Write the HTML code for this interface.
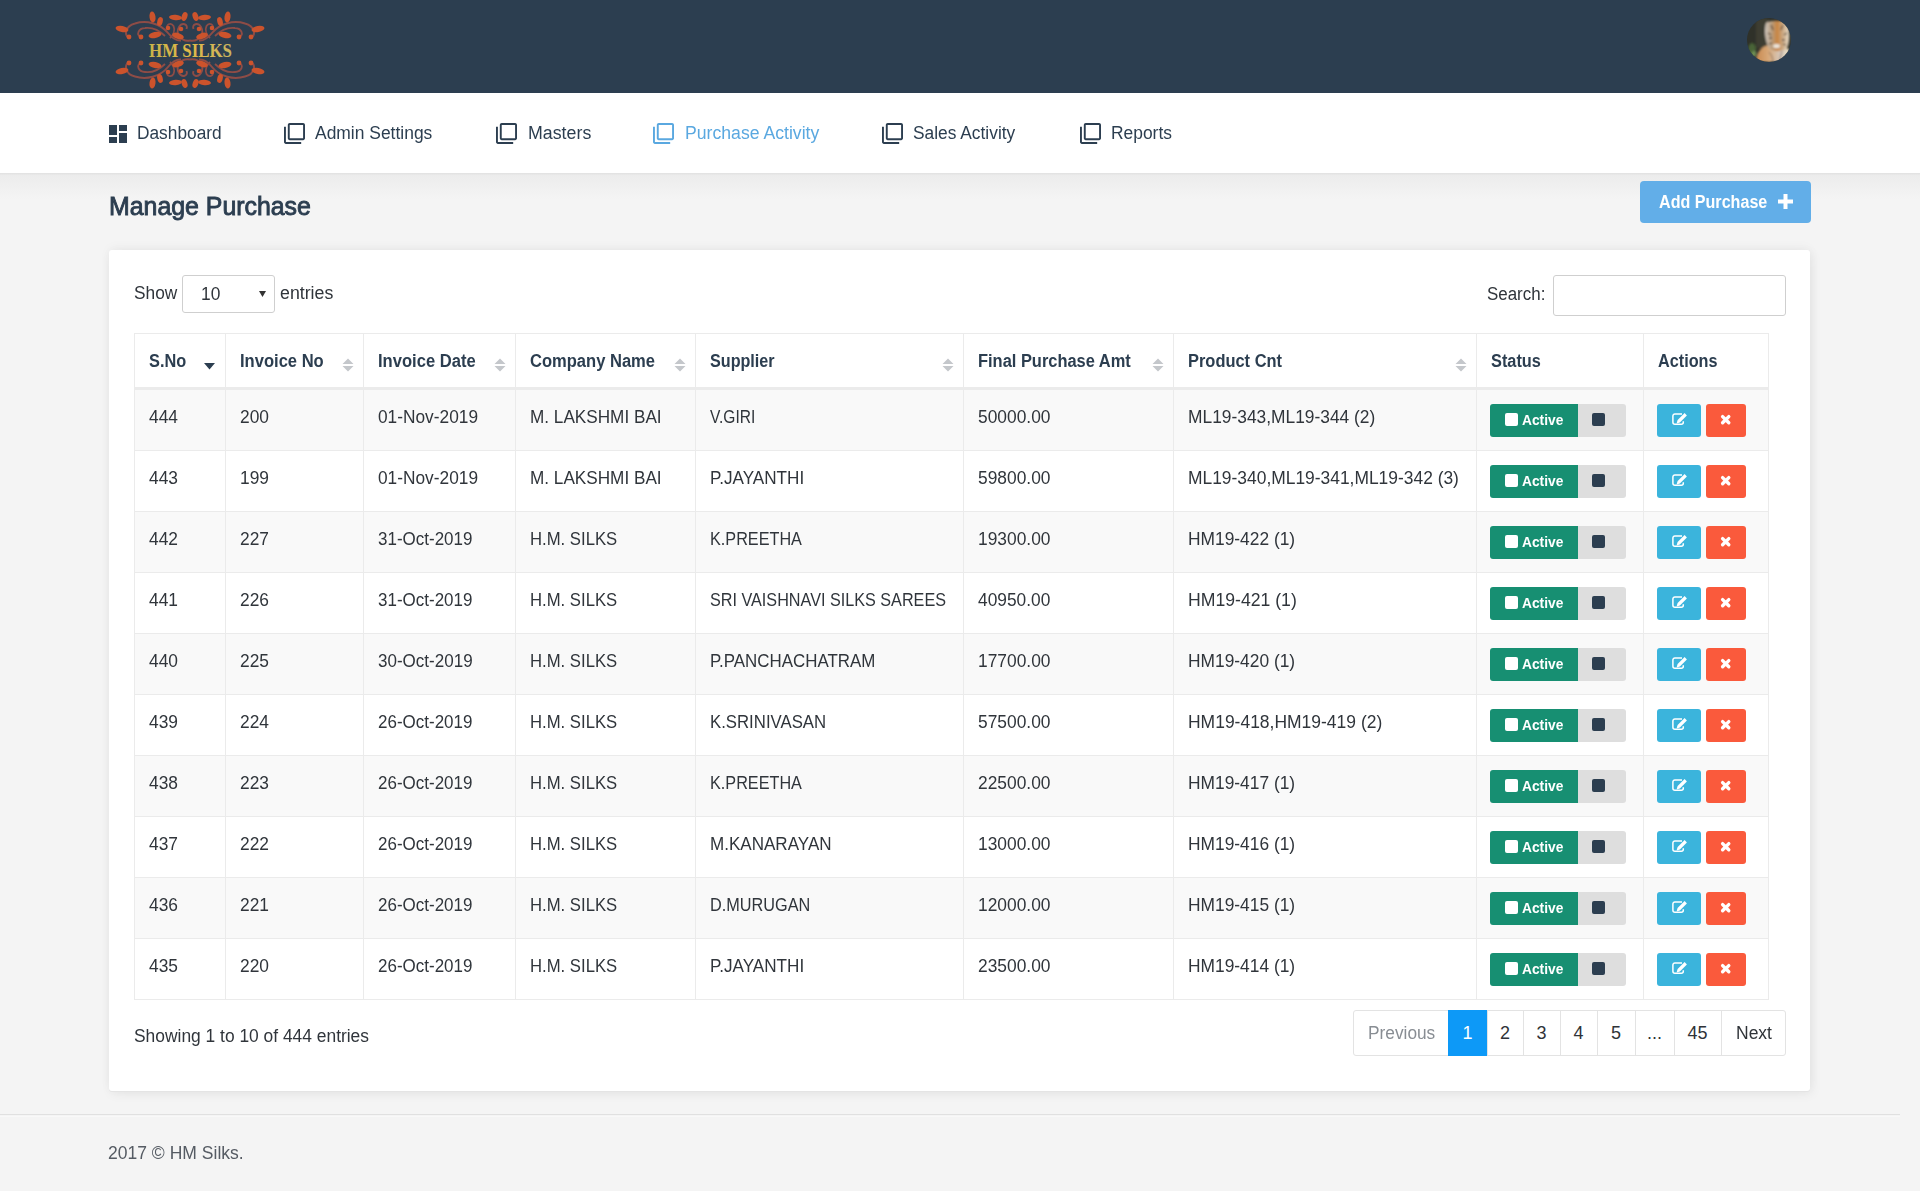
<!DOCTYPE html><html><head><meta charset="utf-8"><title>Manage Purchase</title><style>*{box-sizing:border-box;margin:0;padding:0}
html,body{width:1920px;height:1191px;overflow:hidden}
body{background:#f4f4f4;font-family:"Liberation Sans",sans-serif;color:#30353b;position:relative}
.t{position:absolute;white-space:nowrap;transform-origin:0 50%}
.ic{position:absolute}
.hdr{position:absolute;left:0;top:0;width:1920px;height:93px;background:#2c3e50}
.logo{position:absolute;left:110px;top:5px}
.avatar{position:absolute;left:1747px;top:18px;width:44px;height:44px;border-radius:50%;overflow:hidden;background:#3b3a30}
.av1{position:absolute;left:0;top:0;width:44px;height:44px;background:radial-gradient(circle at 8px 32px,#6d9a4a 0,#3f5a2a 7px,rgba(60,60,45,0) 14px)}
.av2{position:absolute;left:20px;top:2px;width:24px;height:42px;border-radius:40% 40% 30% 30%;background:linear-gradient(90deg,#c9b9a8 0,#c98a4a 40%,#d69a5a 60%,#e4d6c4 100%)}
.av3{position:absolute;left:8px;top:28px;width:30px;height:18px;border-radius:50% 50% 0 0;background:linear-gradient(90deg,#cf9a62,#e8dccd)}
.av4{position:absolute;left:0;top:0;width:44px;height:44px}
.nav{position:absolute;left:0;top:93px;width:1920px;height:80px;background:#fff}
.navshadow{position:absolute;left:0;top:173px;width:1920px;height:26px;background:linear-gradient(#e3e3e3 0,#e3e3e3 1px,#ececec 2px,#f4f4f4 26px)}
.addbtn{position:absolute;left:1640px;top:181px;width:171px;height:42px;background:#62aee8;border-radius:4px}
.card{position:absolute;left:109px;top:250px;width:1701px;height:841px;background:#fff;border-radius:3px;box-shadow:0 1px 0 #e4e4e4,2px 3px 12px rgba(0,0,0,0.06),0 -2px 12px rgba(0,0,0,0.04)}
.sel{position:absolute;left:182px;top:275px;width:93px;height:38px;border:1px solid #cfcfcf;border-radius:3px;background:#fff}
.sinput{position:absolute;left:1553px;top:275px;width:233px;height:41px;border:1px solid #cfcfcf;border-radius:3px;background:#fff}
.tbl{position:absolute;left:134px;top:333px;width:1635px;height:667px;border:1px solid #ebebeb;background:#fff}
.thb{position:absolute;left:135px;top:387px;width:1633px;height:3px;background:#ebebeb}
.tr{position:absolute;left:135px;width:1633px;height:61px;border-bottom:1px solid #ebebeb}
.vl{position:absolute;top:334px;width:1px;height:665px;background:#ebebeb}
.stg{position:absolute;width:88px;height:33px;background:#178f72;border-radius:3px 0 0 3px}
.stx{position:absolute;width:48px;height:33px;background:#dedede;border-radius:0 3px 3px 0}
.sq{position:absolute;width:13px;height:13px;border-radius:2px}
.sq.w{background:#fff}
.sq.d{background:#2c3e50}
.ed{position:absolute;width:44px;height:33px;background:#3bb4dc;border-radius:3px}
.dl{position:absolute;width:40px;height:33px;background:#fa5a3c;border-radius:3px}
.pag{position:absolute;left:1353px;top:1010px;width:433px;height:46px;border:1px solid #e3e3e3;border-radius:3px;background:#fff}
.pl{position:absolute;top:1010px;width:1px;height:46px;background:#e3e3e3}
.pcur{position:absolute;top:1010px;height:46px;background:#0d99f7}
.pt{position:absolute;top:1010px;height:46px;line-height:46px;text-align:center;font-size:18px}
.fline{position:absolute;left:0;top:1114px;width:1900px;height:1px;background:#e0e0e0;box-shadow:0 2px 0 #f8f8f8}
</style></head><body>
<div class="hdr"></div><svg class="logo" width="160" height="90" viewBox="0 0 160 90">
<defs>
<linearGradient id="lg" x1="0" x2="1" y1="0" y2="0"><stop offset="0" stop-color="#c8b44a"/><stop offset="0.5" stop-color="#e0b848"/><stop offset="1" stop-color="#c9b460"/></linearGradient>

</defs>
<g>
<path fill="none" stroke="#8e4c46" stroke-width="2" d="M19 33C14 30 15 21 25 18.5C36 15 50 18 58 28C62 33 66 36 71 35.5"/>
<path fill="none" stroke="#8e4c46" stroke-width="1.8" d="M31 32C26 30 28 23.5 35 23C43 22 50 26 55 31"/>
<path fill="none" stroke="#8e4c46" stroke-width="1.8" d="M58 24C55 19.5 61 17 63.5 21C65.5 25 63 30 60 33"/>
<path fill="none" stroke="#8e4c46" stroke-width="1.9" d="M80 35.5C71 37 65 29 69 22C72 17 78.5 19 76.5 24"/>
<ellipse cx="12" cy="24" rx="6.5" ry="3" fill="#cc532c" transform="rotate(10 12 24)"/>
<ellipse cx="42.5" cy="12" rx="3" ry="5.5" fill="#cc532c" transform="rotate(-8 42.5 12)"/>
<ellipse cx="50" cy="16.5" rx="2.7" ry="4.5" fill="#cc532c" transform="rotate(15 50 16.5)"/>
<ellipse cx="45" cy="30" rx="6.5" ry="3" fill="#cc532c" transform="rotate(-10 45 30)"/>
<ellipse cx="65.5" cy="12.5" rx="6.5" ry="2.7" fill="#cc532c" transform="rotate(5 65.5 12.5)"/>
<ellipse cx="74.5" cy="11.5" rx="2.8" ry="4.5" fill="#cc532c" transform="rotate(20 74.5 11.5)"/>
<ellipse cx="68" cy="31" rx="6" ry="3" fill="#cc532c" transform="rotate(18 68 31)"/>
<circle cx="19" cy="32" r="2.4" fill="#cc532c"/>
<circle cx="31" cy="32" r="2.4" fill="#cc532c"/>
<circle cx="58" cy="23" r="2.3" fill="#cc532c"/>
<circle cx="71" cy="24" r="2.3" fill="#cc532c"/>
</g>
<g transform="translate(160 0) scale(-1 1)">
<path fill="none" stroke="#8e4c46" stroke-width="2" d="M19 33C14 30 15 21 25 18.5C36 15 50 18 58 28C62 33 66 36 71 35.5"/>
<path fill="none" stroke="#8e4c46" stroke-width="1.8" d="M31 32C26 30 28 23.5 35 23C43 22 50 26 55 31"/>
<path fill="none" stroke="#8e4c46" stroke-width="1.8" d="M58 24C55 19.5 61 17 63.5 21C65.5 25 63 30 60 33"/>
<path fill="none" stroke="#8e4c46" stroke-width="1.9" d="M80 35.5C71 37 65 29 69 22C72 17 78.5 19 76.5 24"/>
<ellipse cx="12" cy="24" rx="6.5" ry="3" fill="#cc532c" transform="rotate(10 12 24)"/>
<ellipse cx="42.5" cy="12" rx="3" ry="5.5" fill="#cc532c" transform="rotate(-8 42.5 12)"/>
<ellipse cx="50" cy="16.5" rx="2.7" ry="4.5" fill="#cc532c" transform="rotate(15 50 16.5)"/>
<ellipse cx="45" cy="30" rx="6.5" ry="3" fill="#cc532c" transform="rotate(-10 45 30)"/>
<ellipse cx="65.5" cy="12.5" rx="6.5" ry="2.7" fill="#cc532c" transform="rotate(5 65.5 12.5)"/>
<ellipse cx="74.5" cy="11.5" rx="2.8" ry="4.5" fill="#cc532c" transform="rotate(20 74.5 11.5)"/>
<ellipse cx="68" cy="31" rx="6" ry="3" fill="#cc532c" transform="rotate(18 68 31)"/>
<circle cx="19" cy="32" r="2.4" fill="#cc532c"/>
<circle cx="31" cy="32" r="2.4" fill="#cc532c"/>
<circle cx="58" cy="23" r="2.3" fill="#cc532c"/>
<circle cx="71" cy="24" r="2.3" fill="#cc532c"/>
</g>
<g transform="translate(0 90) scale(1 -1)">
<path fill="none" stroke="#8e4c46" stroke-width="2" d="M19 33C14 30 15 21 25 18.5C36 15 50 18 58 28C62 33 66 36 71 35.5"/>
<path fill="none" stroke="#8e4c46" stroke-width="1.8" d="M31 32C26 30 28 23.5 35 23C43 22 50 26 55 31"/>
<path fill="none" stroke="#8e4c46" stroke-width="1.8" d="M58 24C55 19.5 61 17 63.5 21C65.5 25 63 30 60 33"/>
<path fill="none" stroke="#8e4c46" stroke-width="1.9" d="M80 35.5C71 37 65 29 69 22C72 17 78.5 19 76.5 24"/>
<ellipse cx="12" cy="24" rx="6.5" ry="3" fill="#cc532c" transform="rotate(10 12 24)"/>
<ellipse cx="42.5" cy="12" rx="3" ry="5.5" fill="#cc532c" transform="rotate(-8 42.5 12)"/>
<ellipse cx="50" cy="16.5" rx="2.7" ry="4.5" fill="#cc532c" transform="rotate(15 50 16.5)"/>
<ellipse cx="45" cy="30" rx="6.5" ry="3" fill="#cc532c" transform="rotate(-10 45 30)"/>
<ellipse cx="65.5" cy="12.5" rx="6.5" ry="2.7" fill="#cc532c" transform="rotate(5 65.5 12.5)"/>
<ellipse cx="74.5" cy="11.5" rx="2.8" ry="4.5" fill="#cc532c" transform="rotate(20 74.5 11.5)"/>
<ellipse cx="68" cy="31" rx="6" ry="3" fill="#cc532c" transform="rotate(18 68 31)"/>
<circle cx="19" cy="32" r="2.4" fill="#cc532c"/>
<circle cx="31" cy="32" r="2.4" fill="#cc532c"/>
<circle cx="58" cy="23" r="2.3" fill="#cc532c"/>
<circle cx="71" cy="24" r="2.3" fill="#cc532c"/>
</g>
<g transform="translate(160 90) scale(-1 -1)">
<path fill="none" stroke="#8e4c46" stroke-width="2" d="M19 33C14 30 15 21 25 18.5C36 15 50 18 58 28C62 33 66 36 71 35.5"/>
<path fill="none" stroke="#8e4c46" stroke-width="1.8" d="M31 32C26 30 28 23.5 35 23C43 22 50 26 55 31"/>
<path fill="none" stroke="#8e4c46" stroke-width="1.8" d="M58 24C55 19.5 61 17 63.5 21C65.5 25 63 30 60 33"/>
<path fill="none" stroke="#8e4c46" stroke-width="1.9" d="M80 35.5C71 37 65 29 69 22C72 17 78.5 19 76.5 24"/>
<ellipse cx="12" cy="24" rx="6.5" ry="3" fill="#cc532c" transform="rotate(10 12 24)"/>
<ellipse cx="42.5" cy="12" rx="3" ry="5.5" fill="#cc532c" transform="rotate(-8 42.5 12)"/>
<ellipse cx="50" cy="16.5" rx="2.7" ry="4.5" fill="#cc532c" transform="rotate(15 50 16.5)"/>
<ellipse cx="45" cy="30" rx="6.5" ry="3" fill="#cc532c" transform="rotate(-10 45 30)"/>
<ellipse cx="65.5" cy="12.5" rx="6.5" ry="2.7" fill="#cc532c" transform="rotate(5 65.5 12.5)"/>
<ellipse cx="74.5" cy="11.5" rx="2.8" ry="4.5" fill="#cc532c" transform="rotate(20 74.5 11.5)"/>
<ellipse cx="68" cy="31" rx="6" ry="3" fill="#cc532c" transform="rotate(18 68 31)"/>
<circle cx="19" cy="32" r="2.4" fill="#cc532c"/>
<circle cx="31" cy="32" r="2.4" fill="#cc532c"/>
<circle cx="58" cy="23" r="2.3" fill="#cc532c"/>
<circle cx="71" cy="24" r="2.3" fill="#cc532c"/>
</g>
<text x="80.5" y="51.8" text-anchor="middle" font-family="Liberation Serif" font-weight="bold" font-size="18.5" fill="url(#lg)" textLength="83" lengthAdjust="spacingAndGlyphs">HM SILKS</text>
</svg>
<svg class="ic" style="left:1747px;top:18px" width="44" height="44" viewBox="0 0 44 44">
<defs>
<clipPath id="avc"><circle cx="22" cy="22" r="22"/></clipPath>
<filter id="avf" x="-10%" y="-10%" width="120%" height="120%"><feGaussianBlur stdDeviation="0.8"/></filter>
<linearGradient id="avh" x1="0" x2="1" y1="0" y2="0"><stop offset="0" stop-color="#cfc6bd"/><stop offset="0.3" stop-color="#b89a78"/><stop offset="0.5" stop-color="#c98440"/><stop offset="0.7" stop-color="#c9a47c"/><stop offset="1" stop-color="#e8dcc8"/></linearGradient>
<linearGradient id="avb" x1="0" x2="1" y1="0" y2="0"><stop offset="0" stop-color="#c88a50"/><stop offset="0.35" stop-color="#d8a878"/><stop offset="0.7" stop-color="#d6c8bc"/><stop offset="1" stop-color="#efe2c0"/></linearGradient>
</defs>
<g clip-path="url(#avc)">
<rect width="44" height="44" fill="#2f3129"/>
<g filter="url(#avf)">
<rect x="9" y="0" width="12" height="30" fill="#3d3e33"/>
<ellipse cx="5" cy="32" rx="4" ry="7" fill="#5a8540" opacity="0.6"/>
<ellipse cx="7" cy="36" rx="2.5" ry="3" fill="#8fb870" opacity="0.55"/>
<path d="M9 44C9 35 14 28 22 27C32 26 41 29 44 34V44z" fill="url(#avb)"/>
<path d="M19 5C22 2 37 2 40 5C43 11 43 24 40 30C36 34 25 34 22 30C18 24 17 11 19 5z" fill="url(#avh)"/>
<path d="M24 7l2 5M36 7l-2 5M21 15l3 2M40 15l-3 2M22 26l3-1M39 27l-3-1" stroke="#2e2018" stroke-width="1.1" opacity="0.85"/>
<circle cx="23.5" cy="20" r="1.1" fill="#1d1d22"/><circle cx="36.5" cy="22" r="1.1" fill="#1d1d22"/>
<ellipse cx="29.5" cy="28" rx="3.5" ry="2" fill="#ece6dc"/>
<path d="M22 34c3 3 4 7 4 10M35 33c-1 4-2 7-2 11" stroke="#5a4434" stroke-width="1" fill="none" opacity="0.6"/>
</g>
</g>
</svg>

<div class="nav"></div><div class="navshadow"></div>
<svg class="ic" style="left:109px;top:125px" width="18" height="18" viewBox="3 3 18 18"><path fill="#2c3e50" d="M3 13h8V3H3v10zm0 8h8v-6H3v6zm10 0h8V11h-8v10zm0-18v6h8V3h-8z"/></svg>
<div class="t" style="left:137.20px;top:121.76px;font-size:18px;line-height:22px;transform:scaleX(0.9611);color:#2c3e50;">Dashboard</div>
<svg class="ic" style="left:284px;top:123px" width="21" height="21" viewBox="1 1 22 22"><path fill="#2c3e50" d="M3 5H1v16c0 1.1.9 2 2 2h16v-2H3V5zm18-4H7c-1.1 0-2 .9-2 2v14c0 1.1.9 2 2 2h14c1.1 0 2-.9 2-2V3c0-1.1-.9-2-2-2zm0 16H7V3h14v14z"/></svg>
<div class="t" style="left:315.30px;top:121.76px;font-size:18px;line-height:22px;transform:scaleX(0.9689);color:#2c3e50;">Admin Settings</div>
<svg class="ic" style="left:496px;top:123px" width="21" height="21" viewBox="1 1 22 22"><path fill="#2c3e50" d="M3 5H1v16c0 1.1.9 2 2 2h16v-2H3V5zm18-4H7c-1.1 0-2 .9-2 2v14c0 1.1.9 2 2 2h14c1.1 0 2-.9 2-2V3c0-1.1-.9-2-2-2zm0 16H7V3h14v14z"/></svg>
<div class="t" style="left:527.80px;top:121.76px;font-size:18px;line-height:22px;transform:scaleX(0.9887);color:#2c3e50;">Masters</div>
<svg class="ic" style="left:652.5px;top:123px" width="21" height="21" viewBox="1 1 22 22"><path fill="#5aa8e0" d="M3 5H1v16c0 1.1.9 2 2 2h16v-2H3V5zm18-4H7c-1.1 0-2 .9-2 2v14c0 1.1.9 2 2 2h14c1.1 0 2-.9 2-2V3c0-1.1-.9-2-2-2zm0 16H7V3h14v14z"/></svg>
<div class="t" style="left:684.60px;top:121.76px;font-size:18px;line-height:22px;transform:scaleX(0.9799);color:#5aa8e0;">Purchase Activity</div>
<svg class="ic" style="left:882px;top:123px" width="21" height="21" viewBox="1 1 22 22"><path fill="#2c3e50" d="M3 5H1v16c0 1.1.9 2 2 2h16v-2H3V5zm18-4H7c-1.1 0-2 .9-2 2v14c0 1.1.9 2 2 2h14c1.1 0 2-.9 2-2V3c0-1.1-.9-2-2-2zm0 16H7V3h14v14z"/></svg>
<div class="t" style="left:913.40px;top:121.76px;font-size:18px;line-height:22px;transform:scaleX(0.9642);color:#2c3e50;">Sales Activity</div>
<svg class="ic" style="left:1080px;top:123px" width="21" height="21" viewBox="1 1 22 22"><path fill="#2c3e50" d="M3 5H1v16c0 1.1.9 2 2 2h16v-2H3V5zm18-4H7c-1.1 0-2 .9-2 2v14c0 1.1.9 2 2 2h14c1.1 0 2-.9 2-2V3c0-1.1-.9-2-2-2zm0 16H7V3h14v14z"/></svg>
<div class="t" style="left:1111.40px;top:121.76px;font-size:18px;line-height:22px;transform:scaleX(0.9673);color:#2c3e50;">Reports</div>
<div class="t" style="left:109.00px;top:190.99px;font-size:26px;line-height:31px;transform:scaleX(0.9566);color:#2c3e50;-webkit-text-stroke:0.9px #2c3e50;">Manage Purchase</div>
<div class="addbtn"></div>
<div class="t" style="left:1658.50px;top:190.76px;font-size:18px;line-height:22px;transform:scaleX(0.8949);font-weight:bold;color:#fff;">Add Purchase</div>
<svg class="ic" style="left:1778px;top:194px" width="15" height="15" viewBox="0 0 15 15"><path fill="#fff" d="M5.5 0h4v5.5H15v4H9.5V15h-4V9.5H0v-4h5.5z"/></svg>
<div class="card"></div>
<div class="t" style="left:133.50px;top:282.26px;font-size:18px;line-height:22px;transform:scaleX(0.9603);">Show</div>
<div class="sel"></div><div class="t" style="left:201.00px;top:283.06px;font-size:18px;line-height:22px;transform:scaleX(0.9650);">10</div><svg class="ic" style="left:259px;top:291px" width="7" height="6" viewBox="0 0 7 6"><path fill="#333" d="M0 0h7L3.5 6z"/></svg>
<div class="t" style="left:280.00px;top:282.26px;font-size:18px;line-height:22px;transform:scaleX(0.9866);">entries</div>
<div class="t" style="left:1486.50px;top:283.26px;font-size:18px;line-height:22px;transform:scaleX(0.9405);">Search:</div>
<div class="sinput"></div>
<div class="tbl"></div><div class="thb"></div>
<div class="tr" style="top:390px;background:#f9f9f9"></div>
<div class="tr" style="top:451px;background:#fff"></div>
<div class="tr" style="top:512px;background:#f9f9f9"></div>
<div class="tr" style="top:573px;background:#fff"></div>
<div class="tr" style="top:634px;background:#f9f9f9"></div>
<div class="tr" style="top:695px;background:#fff"></div>
<div class="tr" style="top:756px;background:#f9f9f9"></div>
<div class="tr" style="top:817px;background:#fff"></div>
<div class="tr" style="top:878px;background:#f9f9f9"></div>
<div class="tr" style="top:939px;background:#fff"></div>
<div class="vl" style="left:225px"></div>
<div class="vl" style="left:363px"></div>
<div class="vl" style="left:515px"></div>
<div class="vl" style="left:695px"></div>
<div class="vl" style="left:963px"></div>
<div class="vl" style="left:1173px"></div>
<div class="vl" style="left:1476px"></div>
<div class="vl" style="left:1643px"></div>
<div class="t" style="left:148.60px;top:349.76px;font-size:18px;line-height:22px;transform:scaleX(0.9072);font-weight:bold;color:#2c3e50;">S.No</div>
<svg class="ic" style="left:204px;top:363px" width="11" height="7" viewBox="0 0 11 7"><path fill="#2c3e50" d="M0 0h11L5.5 6.5z"/></svg>
<div class="t" style="left:239.60px;top:349.76px;font-size:18px;line-height:22px;transform:scaleX(0.9198);font-weight:bold;color:#2c3e50;">Invoice No</div>
<svg class="ic" style="left:342px;top:358px" width="12" height="14" viewBox="0 0 12 14"><path fill="#c4c7cb" d="M0.5 6h11L6 0.5zM0.5 8h11L6 13.5z"/></svg>
<div class="t" style="left:377.60px;top:349.76px;font-size:18px;line-height:22px;transform:scaleX(0.9207);font-weight:bold;color:#2c3e50;">Invoice Date</div>
<svg class="ic" style="left:494px;top:358px" width="12" height="14" viewBox="0 0 12 14"><path fill="#c4c7cb" d="M0.5 6h11L6 0.5zM0.5 8h11L6 13.5z"/></svg>
<div class="t" style="left:529.60px;top:349.76px;font-size:18px;line-height:22px;transform:scaleX(0.9189);font-weight:bold;color:#2c3e50;">Company Name</div>
<svg class="ic" style="left:674px;top:358px" width="12" height="14" viewBox="0 0 12 14"><path fill="#c4c7cb" d="M0.5 6h11L6 0.5zM0.5 8h11L6 13.5z"/></svg>
<div class="t" style="left:709.60px;top:349.76px;font-size:18px;line-height:22px;transform:scaleX(0.8972);font-weight:bold;color:#2c3e50;">Supplier</div>
<svg class="ic" style="left:942px;top:358px" width="12" height="14" viewBox="0 0 12 14"><path fill="#c4c7cb" d="M0.5 6h11L6 0.5zM0.5 8h11L6 13.5z"/></svg>
<div class="t" style="left:977.60px;top:349.76px;font-size:18px;line-height:22px;transform:scaleX(0.9129);font-weight:bold;color:#2c3e50;">Final Purchase Amt</div>
<svg class="ic" style="left:1152px;top:358px" width="12" height="14" viewBox="0 0 12 14"><path fill="#c4c7cb" d="M0.5 6h11L6 0.5zM0.5 8h11L6 13.5z"/></svg>
<div class="t" style="left:1187.60px;top:349.76px;font-size:18px;line-height:22px;transform:scaleX(0.9128);font-weight:bold;color:#2c3e50;">Product Cnt</div>
<svg class="ic" style="left:1455px;top:358px" width="12" height="14" viewBox="0 0 12 14"><path fill="#c4c7cb" d="M0.5 6h11L6 0.5zM0.5 8h11L6 13.5z"/></svg>
<div class="t" style="left:1490.60px;top:349.76px;font-size:18px;line-height:22px;transform:scaleX(0.9073);font-weight:bold;color:#2c3e50;">Status</div>
<div class="t" style="left:1657.60px;top:349.76px;font-size:18px;line-height:22px;transform:scaleX(0.9016);font-weight:bold;color:#2c3e50;">Actions</div>
<div class="t" style="left:148.60px;top:405.76px;font-size:18px;line-height:22px;transform:scaleX(0.9650);">444</div>
<div class="t" style="left:239.60px;top:405.76px;font-size:18px;line-height:22px;transform:scaleX(0.9650);">200</div>
<div class="t" style="left:377.60px;top:405.76px;font-size:18px;line-height:22px;transform:scaleX(0.9611);">01-Nov-2019</div>
<div class="t" style="left:529.60px;top:405.76px;font-size:18px;line-height:22px;transform:scaleX(0.9535);">M. LAKSHMI BAI</div>
<div class="t" style="left:709.60px;top:405.76px;font-size:18px;line-height:22px;transform:scaleX(0.8646);">V.GIRI</div>
<div class="t" style="left:977.60px;top:405.76px;font-size:18px;line-height:22px;transform:scaleX(0.9650);">50000.00</div>
<div class="t" style="left:1187.60px;top:405.76px;font-size:18px;line-height:22px;transform:scaleX(0.9650);">ML19-343,ML19-344 (2)</div>
<div class="stg" style="left:1490px;top:404px"></div><div class="sq w" style="left:1505px;top:413px"></div>
<div class="t" style="left:1521.50px;top:410.80px;font-size:15px;line-height:18px;transform:scaleX(0.9176);font-weight:bold;color:#fff;">Active</div>
<div class="stx" style="left:1578px;top:404px"></div><div class="sq d" style="left:1592px;top:413px"></div>
<div class="ed" style="left:1657px;top:404px"></div><svg class="ic" style="left:1671px;top:412px" width="17" height="14" viewBox="0 0 17 14"><path fill="none" stroke="#fff" stroke-width="1.5" d="M11 1.9H3.9a2 2 0 0 0-2 2v6.4a2 2 0 0 0 2 2h6.4a2 2 0 0 0 2-2V9.3"/><path fill="#fff" d="M5.6 11.4L6.6 8.1L13.6 1.1L15.9 3.4L8.9 10.4Z"/></svg>
<div class="dl" style="left:1706px;top:404px"></div><svg class="ic" style="left:1720px;top:414px" width="12" height="12" viewBox="0 0 12 12"><path stroke="#fff" stroke-width="3.4" stroke-linecap="round" d="M2.6 2.6l6.2 6.2M8.8 2.6l-6.2 6.2"/></svg>
<div class="t" style="left:148.60px;top:466.76px;font-size:18px;line-height:22px;transform:scaleX(0.9650);">443</div>
<div class="t" style="left:239.60px;top:466.76px;font-size:18px;line-height:22px;transform:scaleX(0.9650);">199</div>
<div class="t" style="left:377.60px;top:466.76px;font-size:18px;line-height:22px;transform:scaleX(0.9611);">01-Nov-2019</div>
<div class="t" style="left:529.60px;top:466.76px;font-size:18px;line-height:22px;transform:scaleX(0.9535);">M. LAKSHMI BAI</div>
<div class="t" style="left:709.60px;top:466.76px;font-size:18px;line-height:22px;transform:scaleX(0.9513);">P.JAYANTHI</div>
<div class="t" style="left:977.60px;top:466.76px;font-size:18px;line-height:22px;transform:scaleX(0.9650);">59800.00</div>
<div class="t" style="left:1187.60px;top:466.76px;font-size:18px;line-height:22px;transform:scaleX(0.9670);">ML19-340,ML19-341,ML19-342 (3)</div>
<div class="stg" style="left:1490px;top:465px"></div><div class="sq w" style="left:1505px;top:474px"></div>
<div class="t" style="left:1521.50px;top:471.80px;font-size:15px;line-height:18px;transform:scaleX(0.9176);font-weight:bold;color:#fff;">Active</div>
<div class="stx" style="left:1578px;top:465px"></div><div class="sq d" style="left:1592px;top:474px"></div>
<div class="ed" style="left:1657px;top:465px"></div><svg class="ic" style="left:1671px;top:473px" width="17" height="14" viewBox="0 0 17 14"><path fill="none" stroke="#fff" stroke-width="1.5" d="M11 1.9H3.9a2 2 0 0 0-2 2v6.4a2 2 0 0 0 2 2h6.4a2 2 0 0 0 2-2V9.3"/><path fill="#fff" d="M5.6 11.4L6.6 8.1L13.6 1.1L15.9 3.4L8.9 10.4Z"/></svg>
<div class="dl" style="left:1706px;top:465px"></div><svg class="ic" style="left:1720px;top:475px" width="12" height="12" viewBox="0 0 12 12"><path stroke="#fff" stroke-width="3.4" stroke-linecap="round" d="M2.6 2.6l6.2 6.2M8.8 2.6l-6.2 6.2"/></svg>
<div class="t" style="left:148.60px;top:527.76px;font-size:18px;line-height:22px;transform:scaleX(0.9650);">442</div>
<div class="t" style="left:239.60px;top:527.76px;font-size:18px;line-height:22px;transform:scaleX(0.9650);">227</div>
<div class="t" style="left:377.60px;top:527.76px;font-size:18px;line-height:22px;transform:scaleX(0.9436);">31-Oct-2019</div>
<div class="t" style="left:529.60px;top:527.76px;font-size:18px;line-height:22px;transform:scaleX(0.9272);">H.M. SILKS</div>
<div class="t" style="left:709.60px;top:527.76px;font-size:18px;line-height:22px;transform:scaleX(0.9008);">K.PREETHA</div>
<div class="t" style="left:977.60px;top:527.76px;font-size:18px;line-height:22px;transform:scaleX(0.9650);">19300.00</div>
<div class="t" style="left:1187.60px;top:527.76px;font-size:18px;line-height:22px;transform:scaleX(0.9650);">HM19-422 (1)</div>
<div class="stg" style="left:1490px;top:526px"></div><div class="sq w" style="left:1505px;top:535px"></div>
<div class="t" style="left:1521.50px;top:532.80px;font-size:15px;line-height:18px;transform:scaleX(0.9176);font-weight:bold;color:#fff;">Active</div>
<div class="stx" style="left:1578px;top:526px"></div><div class="sq d" style="left:1592px;top:535px"></div>
<div class="ed" style="left:1657px;top:526px"></div><svg class="ic" style="left:1671px;top:534px" width="17" height="14" viewBox="0 0 17 14"><path fill="none" stroke="#fff" stroke-width="1.5" d="M11 1.9H3.9a2 2 0 0 0-2 2v6.4a2 2 0 0 0 2 2h6.4a2 2 0 0 0 2-2V9.3"/><path fill="#fff" d="M5.6 11.4L6.6 8.1L13.6 1.1L15.9 3.4L8.9 10.4Z"/></svg>
<div class="dl" style="left:1706px;top:526px"></div><svg class="ic" style="left:1720px;top:536px" width="12" height="12" viewBox="0 0 12 12"><path stroke="#fff" stroke-width="3.4" stroke-linecap="round" d="M2.6 2.6l6.2 6.2M8.8 2.6l-6.2 6.2"/></svg>
<div class="t" style="left:148.60px;top:588.76px;font-size:18px;line-height:22px;transform:scaleX(0.9650);">441</div>
<div class="t" style="left:239.60px;top:588.76px;font-size:18px;line-height:22px;transform:scaleX(0.9650);">226</div>
<div class="t" style="left:377.60px;top:588.76px;font-size:18px;line-height:22px;transform:scaleX(0.9436);">31-Oct-2019</div>
<div class="t" style="left:529.60px;top:588.76px;font-size:18px;line-height:22px;transform:scaleX(0.9272);">H.M. SILKS</div>
<div class="t" style="left:709.60px;top:588.76px;font-size:18px;line-height:22px;transform:scaleX(0.8993);">SRI VAISHNAVI SILKS SAREES</div>
<div class="t" style="left:977.60px;top:588.76px;font-size:18px;line-height:22px;transform:scaleX(0.9632);">40950.00</div>
<div class="t" style="left:1187.60px;top:588.76px;font-size:18px;line-height:22px;transform:scaleX(0.9794);">HM19-421 (1)</div>
<div class="stg" style="left:1490px;top:587px"></div><div class="sq w" style="left:1505px;top:596px"></div>
<div class="t" style="left:1521.50px;top:593.80px;font-size:15px;line-height:18px;transform:scaleX(0.9176);font-weight:bold;color:#fff;">Active</div>
<div class="stx" style="left:1578px;top:587px"></div><div class="sq d" style="left:1592px;top:596px"></div>
<div class="ed" style="left:1657px;top:587px"></div><svg class="ic" style="left:1671px;top:595px" width="17" height="14" viewBox="0 0 17 14"><path fill="none" stroke="#fff" stroke-width="1.5" d="M11 1.9H3.9a2 2 0 0 0-2 2v6.4a2 2 0 0 0 2 2h6.4a2 2 0 0 0 2-2V9.3"/><path fill="#fff" d="M5.6 11.4L6.6 8.1L13.6 1.1L15.9 3.4L8.9 10.4Z"/></svg>
<div class="dl" style="left:1706px;top:587px"></div><svg class="ic" style="left:1720px;top:597px" width="12" height="12" viewBox="0 0 12 12"><path stroke="#fff" stroke-width="3.4" stroke-linecap="round" d="M2.6 2.6l6.2 6.2M8.8 2.6l-6.2 6.2"/></svg>
<div class="t" style="left:148.60px;top:649.76px;font-size:18px;line-height:22px;transform:scaleX(0.9650);">440</div>
<div class="t" style="left:239.60px;top:649.76px;font-size:18px;line-height:22px;transform:scaleX(0.9650);">225</div>
<div class="t" style="left:377.60px;top:649.76px;font-size:18px;line-height:22px;transform:scaleX(0.9456);">30-Oct-2019</div>
<div class="t" style="left:529.60px;top:649.76px;font-size:18px;line-height:22px;transform:scaleX(0.9272);">H.M. SILKS</div>
<div class="t" style="left:709.60px;top:649.76px;font-size:18px;line-height:22px;transform:scaleX(0.9395);">P.PANCHACHATRAM</div>
<div class="t" style="left:977.60px;top:649.76px;font-size:18px;line-height:22px;transform:scaleX(0.9650);">17700.00</div>
<div class="t" style="left:1187.60px;top:649.76px;font-size:18px;line-height:22px;transform:scaleX(0.9650);">HM19-420 (1)</div>
<div class="stg" style="left:1490px;top:648px"></div><div class="sq w" style="left:1505px;top:657px"></div>
<div class="t" style="left:1521.50px;top:654.80px;font-size:15px;line-height:18px;transform:scaleX(0.9176);font-weight:bold;color:#fff;">Active</div>
<div class="stx" style="left:1578px;top:648px"></div><div class="sq d" style="left:1592px;top:657px"></div>
<div class="ed" style="left:1657px;top:648px"></div><svg class="ic" style="left:1671px;top:656px" width="17" height="14" viewBox="0 0 17 14"><path fill="none" stroke="#fff" stroke-width="1.5" d="M11 1.9H3.9a2 2 0 0 0-2 2v6.4a2 2 0 0 0 2 2h6.4a2 2 0 0 0 2-2V9.3"/><path fill="#fff" d="M5.6 11.4L6.6 8.1L13.6 1.1L15.9 3.4L8.9 10.4Z"/></svg>
<div class="dl" style="left:1706px;top:648px"></div><svg class="ic" style="left:1720px;top:658px" width="12" height="12" viewBox="0 0 12 12"><path stroke="#fff" stroke-width="3.4" stroke-linecap="round" d="M2.6 2.6l6.2 6.2M8.8 2.6l-6.2 6.2"/></svg>
<div class="t" style="left:148.60px;top:710.76px;font-size:18px;line-height:22px;transform:scaleX(0.9650);">439</div>
<div class="t" style="left:239.60px;top:710.76px;font-size:18px;line-height:22px;transform:scaleX(0.9650);">224</div>
<div class="t" style="left:377.60px;top:710.76px;font-size:18px;line-height:22px;transform:scaleX(0.9436);">26-Oct-2019</div>
<div class="t" style="left:529.60px;top:710.76px;font-size:18px;line-height:22px;transform:scaleX(0.9272);">H.M. SILKS</div>
<div class="t" style="left:709.60px;top:710.76px;font-size:18px;line-height:22px;transform:scaleX(0.9311);">K.SRINIVASAN</div>
<div class="t" style="left:977.60px;top:710.76px;font-size:18px;line-height:22px;transform:scaleX(0.9650);">57500.00</div>
<div class="t" style="left:1187.60px;top:710.76px;font-size:18px;line-height:22px;transform:scaleX(0.9708);">HM19-418,HM19-419 (2)</div>
<div class="stg" style="left:1490px;top:709px"></div><div class="sq w" style="left:1505px;top:718px"></div>
<div class="t" style="left:1521.50px;top:715.80px;font-size:15px;line-height:18px;transform:scaleX(0.9176);font-weight:bold;color:#fff;">Active</div>
<div class="stx" style="left:1578px;top:709px"></div><div class="sq d" style="left:1592px;top:718px"></div>
<div class="ed" style="left:1657px;top:709px"></div><svg class="ic" style="left:1671px;top:717px" width="17" height="14" viewBox="0 0 17 14"><path fill="none" stroke="#fff" stroke-width="1.5" d="M11 1.9H3.9a2 2 0 0 0-2 2v6.4a2 2 0 0 0 2 2h6.4a2 2 0 0 0 2-2V9.3"/><path fill="#fff" d="M5.6 11.4L6.6 8.1L13.6 1.1L15.9 3.4L8.9 10.4Z"/></svg>
<div class="dl" style="left:1706px;top:709px"></div><svg class="ic" style="left:1720px;top:719px" width="12" height="12" viewBox="0 0 12 12"><path stroke="#fff" stroke-width="3.4" stroke-linecap="round" d="M2.6 2.6l6.2 6.2M8.8 2.6l-6.2 6.2"/></svg>
<div class="t" style="left:148.60px;top:771.76px;font-size:18px;line-height:22px;transform:scaleX(0.9650);">438</div>
<div class="t" style="left:239.60px;top:771.76px;font-size:18px;line-height:22px;transform:scaleX(0.9650);">223</div>
<div class="t" style="left:377.60px;top:771.76px;font-size:18px;line-height:22px;transform:scaleX(0.9436);">26-Oct-2019</div>
<div class="t" style="left:529.60px;top:771.76px;font-size:18px;line-height:22px;transform:scaleX(0.9272);">H.M. SILKS</div>
<div class="t" style="left:709.60px;top:771.76px;font-size:18px;line-height:22px;transform:scaleX(0.9008);">K.PREETHA</div>
<div class="t" style="left:977.60px;top:771.76px;font-size:18px;line-height:22px;transform:scaleX(0.9650);">22500.00</div>
<div class="t" style="left:1187.60px;top:771.76px;font-size:18px;line-height:22px;transform:scaleX(0.9650);">HM19-417 (1)</div>
<div class="stg" style="left:1490px;top:770px"></div><div class="sq w" style="left:1505px;top:779px"></div>
<div class="t" style="left:1521.50px;top:776.80px;font-size:15px;line-height:18px;transform:scaleX(0.9176);font-weight:bold;color:#fff;">Active</div>
<div class="stx" style="left:1578px;top:770px"></div><div class="sq d" style="left:1592px;top:779px"></div>
<div class="ed" style="left:1657px;top:770px"></div><svg class="ic" style="left:1671px;top:778px" width="17" height="14" viewBox="0 0 17 14"><path fill="none" stroke="#fff" stroke-width="1.5" d="M11 1.9H3.9a2 2 0 0 0-2 2v6.4a2 2 0 0 0 2 2h6.4a2 2 0 0 0 2-2V9.3"/><path fill="#fff" d="M5.6 11.4L6.6 8.1L13.6 1.1L15.9 3.4L8.9 10.4Z"/></svg>
<div class="dl" style="left:1706px;top:770px"></div><svg class="ic" style="left:1720px;top:780px" width="12" height="12" viewBox="0 0 12 12"><path stroke="#fff" stroke-width="3.4" stroke-linecap="round" d="M2.6 2.6l6.2 6.2M8.8 2.6l-6.2 6.2"/></svg>
<div class="t" style="left:148.60px;top:832.76px;font-size:18px;line-height:22px;transform:scaleX(0.9650);">437</div>
<div class="t" style="left:239.60px;top:832.76px;font-size:18px;line-height:22px;transform:scaleX(0.9650);">222</div>
<div class="t" style="left:377.60px;top:832.76px;font-size:18px;line-height:22px;transform:scaleX(0.9436);">26-Oct-2019</div>
<div class="t" style="left:529.60px;top:832.76px;font-size:18px;line-height:22px;transform:scaleX(0.9272);">H.M. SILKS</div>
<div class="t" style="left:709.60px;top:832.76px;font-size:18px;line-height:22px;transform:scaleX(0.9473);">M.KANARAYAN</div>
<div class="t" style="left:977.60px;top:832.76px;font-size:18px;line-height:22px;transform:scaleX(0.9650);">13000.00</div>
<div class="t" style="left:1187.60px;top:832.76px;font-size:18px;line-height:22px;transform:scaleX(0.9650);">HM19-416 (1)</div>
<div class="stg" style="left:1490px;top:831px"></div><div class="sq w" style="left:1505px;top:840px"></div>
<div class="t" style="left:1521.50px;top:837.80px;font-size:15px;line-height:18px;transform:scaleX(0.9176);font-weight:bold;color:#fff;">Active</div>
<div class="stx" style="left:1578px;top:831px"></div><div class="sq d" style="left:1592px;top:840px"></div>
<div class="ed" style="left:1657px;top:831px"></div><svg class="ic" style="left:1671px;top:839px" width="17" height="14" viewBox="0 0 17 14"><path fill="none" stroke="#fff" stroke-width="1.5" d="M11 1.9H3.9a2 2 0 0 0-2 2v6.4a2 2 0 0 0 2 2h6.4a2 2 0 0 0 2-2V9.3"/><path fill="#fff" d="M5.6 11.4L6.6 8.1L13.6 1.1L15.9 3.4L8.9 10.4Z"/></svg>
<div class="dl" style="left:1706px;top:831px"></div><svg class="ic" style="left:1720px;top:841px" width="12" height="12" viewBox="0 0 12 12"><path stroke="#fff" stroke-width="3.4" stroke-linecap="round" d="M2.6 2.6l6.2 6.2M8.8 2.6l-6.2 6.2"/></svg>
<div class="t" style="left:148.60px;top:893.76px;font-size:18px;line-height:22px;transform:scaleX(0.9650);">436</div>
<div class="t" style="left:239.60px;top:893.76px;font-size:18px;line-height:22px;transform:scaleX(0.9650);">221</div>
<div class="t" style="left:377.60px;top:893.76px;font-size:18px;line-height:22px;transform:scaleX(0.9436);">26-Oct-2019</div>
<div class="t" style="left:529.60px;top:893.76px;font-size:18px;line-height:22px;transform:scaleX(0.9272);">H.M. SILKS</div>
<div class="t" style="left:709.60px;top:893.76px;font-size:18px;line-height:22px;transform:scaleX(0.9037);">D.MURUGAN</div>
<div class="t" style="left:977.60px;top:893.76px;font-size:18px;line-height:22px;transform:scaleX(0.9650);">12000.00</div>
<div class="t" style="left:1187.60px;top:893.76px;font-size:18px;line-height:22px;transform:scaleX(0.9650);">HM19-415 (1)</div>
<div class="stg" style="left:1490px;top:892px"></div><div class="sq w" style="left:1505px;top:901px"></div>
<div class="t" style="left:1521.50px;top:898.80px;font-size:15px;line-height:18px;transform:scaleX(0.9176);font-weight:bold;color:#fff;">Active</div>
<div class="stx" style="left:1578px;top:892px"></div><div class="sq d" style="left:1592px;top:901px"></div>
<div class="ed" style="left:1657px;top:892px"></div><svg class="ic" style="left:1671px;top:900px" width="17" height="14" viewBox="0 0 17 14"><path fill="none" stroke="#fff" stroke-width="1.5" d="M11 1.9H3.9a2 2 0 0 0-2 2v6.4a2 2 0 0 0 2 2h6.4a2 2 0 0 0 2-2V9.3"/><path fill="#fff" d="M5.6 11.4L6.6 8.1L13.6 1.1L15.9 3.4L8.9 10.4Z"/></svg>
<div class="dl" style="left:1706px;top:892px"></div><svg class="ic" style="left:1720px;top:902px" width="12" height="12" viewBox="0 0 12 12"><path stroke="#fff" stroke-width="3.4" stroke-linecap="round" d="M2.6 2.6l6.2 6.2M8.8 2.6l-6.2 6.2"/></svg>
<div class="t" style="left:148.60px;top:954.76px;font-size:18px;line-height:22px;transform:scaleX(0.9650);">435</div>
<div class="t" style="left:239.60px;top:954.76px;font-size:18px;line-height:22px;transform:scaleX(0.9650);">220</div>
<div class="t" style="left:377.60px;top:954.76px;font-size:18px;line-height:22px;transform:scaleX(0.9436);">26-Oct-2019</div>
<div class="t" style="left:529.60px;top:954.76px;font-size:18px;line-height:22px;transform:scaleX(0.9272);">H.M. SILKS</div>
<div class="t" style="left:709.60px;top:954.76px;font-size:18px;line-height:22px;transform:scaleX(0.9513);">P.JAYANTHI</div>
<div class="t" style="left:977.60px;top:954.76px;font-size:18px;line-height:22px;transform:scaleX(0.9650);">23500.00</div>
<div class="t" style="left:1187.60px;top:954.76px;font-size:18px;line-height:22px;transform:scaleX(0.9650);">HM19-414 (1)</div>
<div class="stg" style="left:1490px;top:953px"></div><div class="sq w" style="left:1505px;top:962px"></div>
<div class="t" style="left:1521.50px;top:959.80px;font-size:15px;line-height:18px;transform:scaleX(0.9176);font-weight:bold;color:#fff;">Active</div>
<div class="stx" style="left:1578px;top:953px"></div><div class="sq d" style="left:1592px;top:962px"></div>
<div class="ed" style="left:1657px;top:953px"></div><svg class="ic" style="left:1671px;top:961px" width="17" height="14" viewBox="0 0 17 14"><path fill="none" stroke="#fff" stroke-width="1.5" d="M11 1.9H3.9a2 2 0 0 0-2 2v6.4a2 2 0 0 0 2 2h6.4a2 2 0 0 0 2-2V9.3"/><path fill="#fff" d="M5.6 11.4L6.6 8.1L13.6 1.1L15.9 3.4L8.9 10.4Z"/></svg>
<div class="dl" style="left:1706px;top:953px"></div><svg class="ic" style="left:1720px;top:963px" width="12" height="12" viewBox="0 0 12 12"><path stroke="#fff" stroke-width="3.4" stroke-linecap="round" d="M2.6 2.6l6.2 6.2M8.8 2.6l-6.2 6.2"/></svg>
<div class="t" style="left:134.00px;top:1024.76px;font-size:18px;line-height:22px;transform:scaleX(0.9664);">Showing 1 to 10 of 444 entries</div>
<div class="pag"></div>
<div class="t" style="left:1367.50px;top:1021.76px;font-size:18px;line-height:22px;transform:scaleX(0.9604);color:#888d93;">Previous</div>
<div class="pcur" style="left:1448px;width:39px"></div>
<div class="pt" style="left:1448px;width:39px;color:#fff">1</div>
<div class="pl" style="left:1487px"></div>
<div class="pt" style="left:1487px;width:36px;color:#2f3338">2</div>
<div class="pl" style="left:1523px"></div>
<div class="pt" style="left:1523px;width:37px;color:#2f3338">3</div>
<div class="pl" style="left:1560px"></div>
<div class="pt" style="left:1560px;width:37px;color:#2f3338">4</div>
<div class="pl" style="left:1597px"></div>
<div class="pt" style="left:1597px;width:38px;color:#2f3338">5</div>
<div class="pl" style="left:1635px"></div>
<div class="pt" style="left:1635px;width:39px;color:#2f3338">...</div>
<div class="pl" style="left:1674px"></div>
<div class="pt" style="left:1674px;width:47px;color:#2f3338">45</div>
<div class="pl" style="left:1721px"></div>
<div class="t" style="left:1735.50px;top:1021.76px;font-size:18px;line-height:22px;transform:scaleX(0.9720);color:#2f3338;">Next</div>
<div class="fline"></div>
<div class="t" style="left:107.50px;top:1142.26px;font-size:18px;line-height:22px;transform:scaleX(0.9739);color:#555b63;">2017 © HM Silks.</div>
</body></html>
